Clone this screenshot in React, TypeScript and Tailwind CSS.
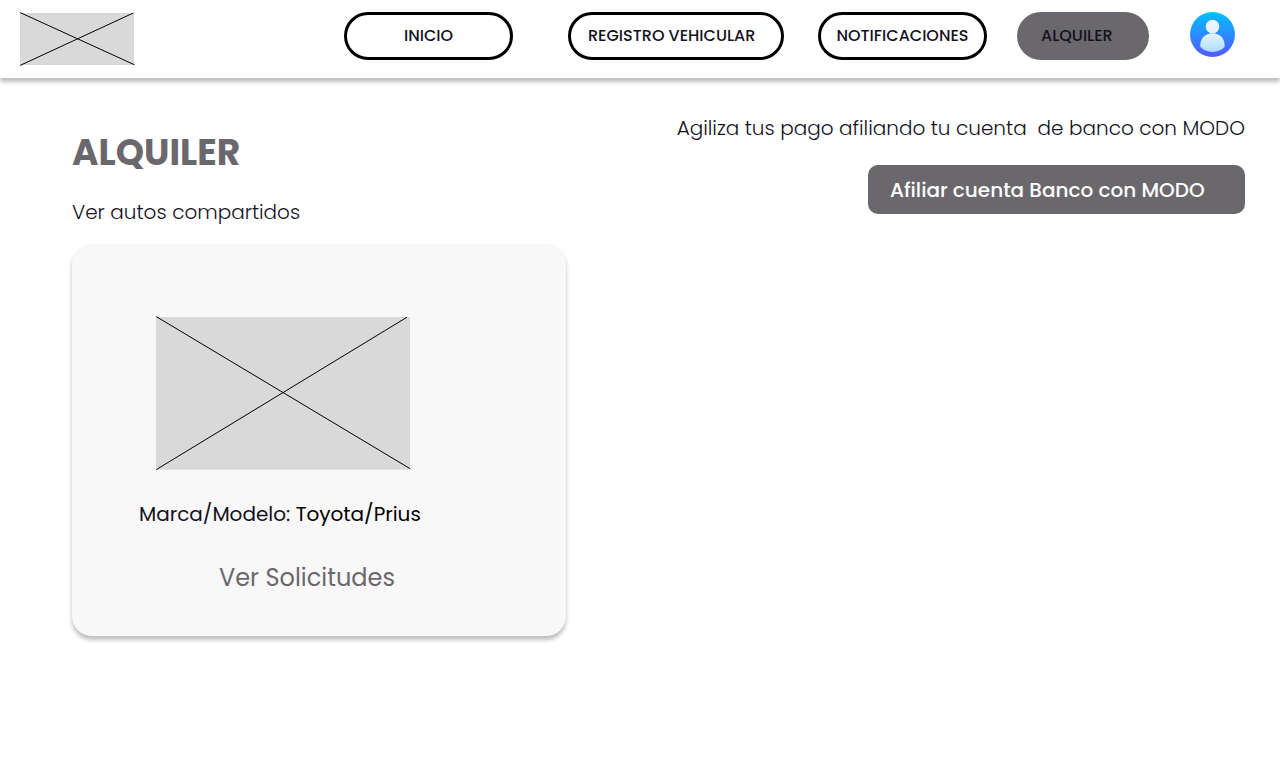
const navItems = [
  { label: "INICIO", style: "w-[169px] border-[3px] border-black text-center" },
  { label: "REGISTRO VEHICULAR", style: "ml-[55px] w-[216px] border-[3px] border-black pl-[17px] text-left" },
  { label: "NOTIFICACIONES", style: "ml-[34px] w-[169px] border-[3px] border-black text-center" },
  { label: "ALQUILER", style: "ml-[30px] w-[132px] bg-[#6b686d] pl-6 text-left" },
];

function Logo() {
  return (
    <svg className="h-[54px] w-[116px] shrink-0" viewBox="0 0 116 54" role="img" aria-label="Logo">
      <rect x="1" y="1" width="114" height="52" fill="#d9d9d9" />
      <path d="M1.2 .6 115.5 52.8M1.2 53.4 114.3 1" stroke="#000" fill="none" />
    </svg>
  );
}

function CarPicture() {
  return (
    <svg className="h-[154px] w-64" viewBox="0 0 256 154" role="img" aria-label="Toyota Prius">
      <rect x="1" y="1" width="254" height="152.6" fill="#d9d9d9" />
      <path d="M1.3 .6 255.3 152.8M1.3 153.6 252 1.2" stroke="#000" fill="none" />
    </svg>
  );
}

function Avatar() {
  return (
    <svg className="size-[45px]" viewBox="0 0 45 45" aria-hidden="true">
      <defs>
        <linearGradient id="disc" x1="0" y1="0" x2="0" y2="1">
          <stop offset="0" stopColor="#00c0ff" />
          <stop offset="1" stopColor="#5558ff" />
        </linearGradient>
        <linearGradient id="person" x1="0" y1="8" x2="0" y2="40" gradientUnits="userSpaceOnUse">
          <stop offset="0" stopColor="#ecf8ff" />
          <stop offset=".45" stopColor="#e4f3ff" />
          <stop offset="1" stopColor="#addcff" />
        </linearGradient>
      </defs>
      <circle cx="22.5" cy="22.5" r="22.5" fill="url(#disc)" />
      <path
        d="M22.5 21.3c-7 0-12.2 5-12.2 11.9v1.6c2.7 3.2 7.2 5.2 12.2 5.2s9.5-2 12.2-5.2v-1.6c0-6.9-5.2-11.9-12.2-11.9Z"
        fill="url(#person)"
      />
      <circle cx="22.5" cy="14.6" r="6.8" fill="url(#person)" />
    </svg>
  );
}

export default function App() {
  return (
    <div className="min-h-screen bg-white font-[Poppins,Inter,sans-serif] text-[#14121e]">
      <header className="flex items-start bg-white pt-3 pr-[45px] pb-3 pl-[19px] shadow-[0_4px_4px_rgba(0,0,0,0.25)]">
        <Logo />
        <nav className="ml-auto flex" aria-label="Principal">
          {navItems.map((item) => (
            <button
              key={item.label}
              type="button"
              className={`h-12 shrink-0 rounded-full text-base font-medium whitespace-nowrap ${item.style}`}
            >
              {item.label}
            </button>
          ))}
        </nav>
        <button type="button" aria-label="Perfil" className="ml-[41px] shrink-0 rounded-full">
          <Avatar />
        </button>
      </header>

      <main className="flex items-start justify-between pt-[34px] pr-[35px] pl-[72px]">
        <section className="pt-[21px]">
          <h1 className="text-4xl leading-10 font-bold text-[#6b686d]">ALQUILER</h1>
          <h2 className="mt-[23px] text-xl leading-8 font-light">Ver autos compartidos</h2>
          <article className="mt-4 w-[494px] rounded-[20px] bg-[#f8f8f8] pt-[72px] pb-10 shadow-[0_4px_4px_rgba(0,0,0,0.25)]">
            <div className="pl-[83px]">
              <CarPicture />
            </div>
            <p className="mt-7 pl-[67px] text-xl leading-8">
              Marca/Modelo: <span className="text-black">Toyota/Prius</span>
            </p>
            <a href="#solicitudes" className="mt-[30px] ml-[147px] inline-block text-2xl leading-9 text-[#6b686d]">
              Ver Solicitudes
            </a>
          </article>
        </section>

        <section className="flex flex-col items-end">
          <p className="text-xl leading-8 font-light whitespace-pre">
            {"Agiliza tus pago afiliando tu cuenta  de banco con MODO"}
          </p>
          <button
            type="button"
            className="mt-[21px] h-[49px] w-[377px] rounded-[10px] bg-[#6b686d] pl-[22px] text-left text-xl font-medium text-white"
          >
            Afiliar cuenta Banco con MODO
          </button>
        </section>
      </main>
    </div>
  );
}
